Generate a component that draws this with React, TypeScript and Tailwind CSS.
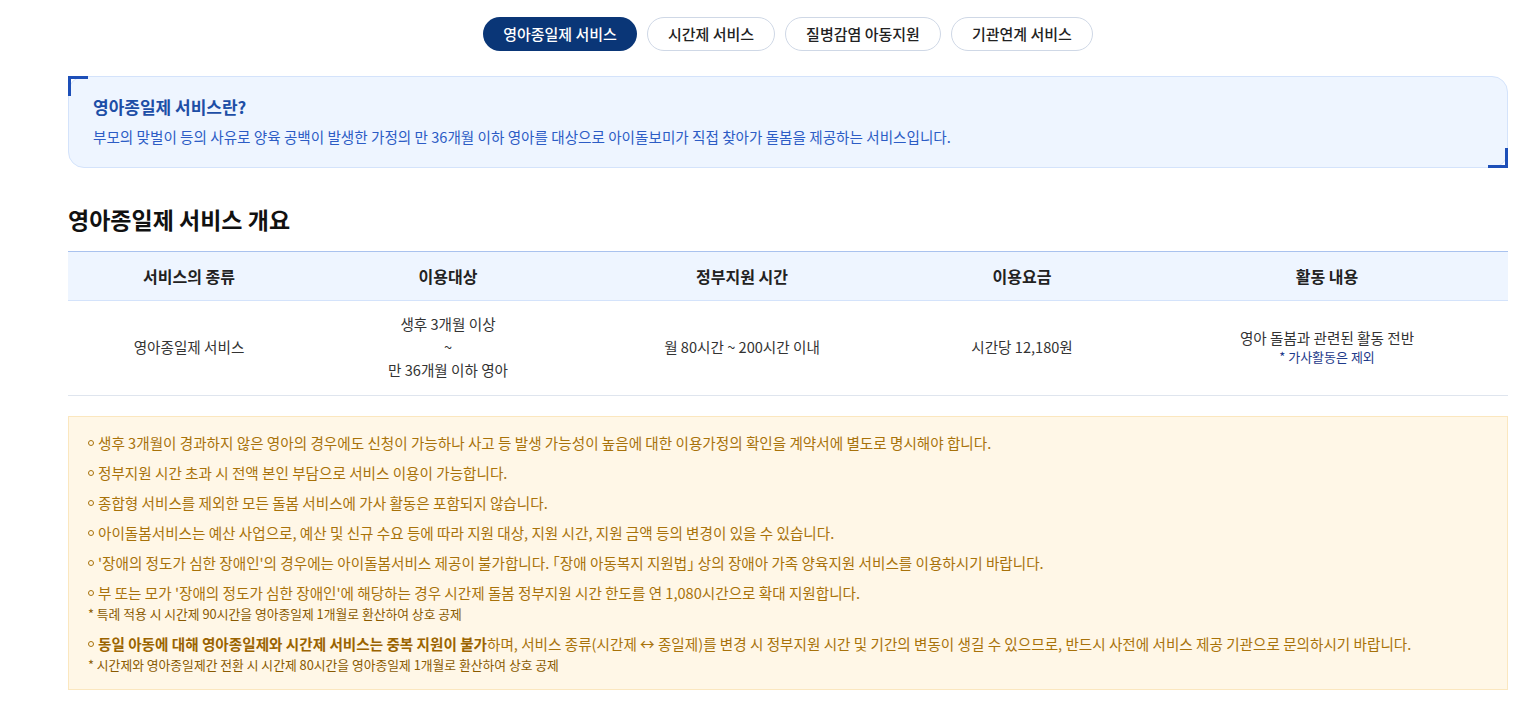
const tabs = ["영아종일제 서비스", "시간제 서비스", "질병감염 아동지원", "기관연계 서비스"];

const columns = [
    { label: "서비스의 종류", w: "w-[242px]" },
    { label: "이용대상", w: "w-[276px]" },
    { label: "정부지원 시간", w: "w-[312px]" },
    { label: "이용요금", w: "w-[248px]" },
    { label: "활동 내용", w: "flex-1" },
];

const notes: { text: React.ReactNode; sub?: string }[] = [
    { text: "생후 3개월이 경과하지 않은 영아의 경우에도 신청이 가능하나 사고 등 발생 가능성이 높음에 대한 이용가정의 확인을 계약서에 별도로 명시해야 합니다." },
    { text: "정부지원 시간 초과 시 전액 본인 부담으로 서비스 이용이 가능합니다." },
    { text: "종합형 서비스를 제외한 모든 돌봄 서비스에 가사 활동은 포함되지 않습니다." },
    { text: "아이돌봄서비스는 예산 사업으로, 예산 및 신규 수요 등에 따라 지원 대상, 지원 시간, 지원 금액 등의 변경이 있을 수 있습니다." },
    { text: "'장애의 정도가 심한 장애인'의 경우에는 아이돌봄서비스 제공이 불가합니다. ｢장애 아동복지 지원법｣ 상의 장애아 가족 양육지원 서비스를 이용하시기 바랍니다." },
    {
        text: "부 또는 모가 '장애의 정도가 심한 장애인'에 해당하는 경우 시간제 돌봄 정부지원 시간 한도를 연 1,080시간으로 확대 지원합니다.",
        sub: "* 특례 적용 시 시간제 90시간을 영아종일제 1개월로 환산하여 상호 공제",
    },
    {
        text: (
            <>
                <b className="font-bold text-[#9a6300]">동일 아동에 대해 영아종일제와 시간제 서비스는 중복 지원이 불가</b>
                하며, 서비스 종류(시간제 ↔ 종일제)를 변경 시 정부지원 시간 및 기간의 변동이 생길 수 있으므로, 반드시 사전에 서비스 제공 기관으로 문의하시기 바랍니다.
            </>
        ),
        sub: "* 시간제와 영아종일제간 전환 시 시간제 80시간을 영아종일제 1개월로 환산하여 상호 공제",
    },
];

export default function App() {
    return (
        <div className="min-h-[714px] bg-white font-['Noto_Sans_CJK_KR','Noto_Sans',sans-serif] text-[#222]">
            <div className="ml-[68px] w-[1440px] pt-[17px]">
                {/* tabs */}
                <div className="flex justify-center gap-[10px]">
                    {tabs.map((t, i) => (
                        <button
                            key={t}
                            className={
                                i === 0
                                    ? "h-[34px] px-[20px] rounded-full bg-[#0a3677] text-white text-[15px] font-medium"
                                    : "h-[34px] px-[20px] rounded-full border border-[#cfd8e6] bg-white text-[#222] text-[15px] font-medium"
                            }
                        >
                            {t}
                        </button>
                    ))}
                </div>

                {/* intro box */}
                <div className="relative mt-[25px] h-[92px] rounded-[16px] border border-[#d4e3fb] bg-[#eef5ff] px-[24px] pt-[18px]">
                    <span className="absolute -left-px -top-px w-[20px] h-[20px] border-l-[3px] border-t-[3px] border-[#1d4fb8]" />
                    <span className="absolute -right-px -bottom-px w-[20px] h-[20px] border-r-[3px] border-b-[3px] border-[#1d4fb8]" />
                    <h3 className="text-[17px] font-bold text-[#1d4ea6] leading-[24px]">영아종일제 서비스란?</h3>
                    <p className="mt-[8px] text-[14.6px] leading-[20px] text-[#2c5cc5]">
                        부모의 맞벌이 등의 사유로 양육 공백이 발생한 가정의 만 36개월 이하 영아를 대상으로 아이돌보미가 직접 찾아가 돌봄을 제공하는 서비스입니다.
                    </p>
                </div>

                {/* overview */}
                <h2 className="mt-[34px] text-[23px] font-bold leading-[34px] text-[#111]">영아종일제 서비스 개요</h2>

                <div className="mt-[15px] border-t border-[#a9c2ee]">
                    <div className="flex h-[49px] items-center bg-[#eef5ff] border-b border-[#d4e3fb]">
                        {columns.map((c) => (
                            <div key={c.label} className={`${c.w} text-center text-[16px] font-bold text-[#222]`}>
                                {c.label}
                            </div>
                        ))}
                    </div>
                    <div className="flex h-[95px] items-center border-b border-[#dfe5ee] pb-[3px] text-[14.6px] text-[#333]">
                        <div className="w-[242px] text-center">영아종일제 서비스</div>
                        <div className="w-[276px] text-center leading-[23px]">
                            <p>생후 3개월 이상</p>
                            <p>~</p>
                            <p>만 36개월 이하 영아</p>
                        </div>
                        <div className="w-[312px] text-center">월 80시간 ~ 200시간 이내</div>
                        <div className="w-[248px] text-center">시간당 12,180원</div>
                        <div className="flex-1 text-center">
                            <p className="leading-[20px]">영아 돌봄과 관련된 활동 전반</p>
                            <p className="text-[13px] leading-[18px] text-[#1e3a8a]">* 가사활동은 제외</p>
                        </div>
                    </div>
                </div>

                {/* notes */}
                <div className="mt-[20px] h-[274px] border border-[#fbe7bf] bg-[#fff7e7] px-[19px] pt-[16px] text-[#a8720a]">
                    <ul>
                        {notes.map((n, i) => (
                            <li key={i} className="mb-[10px]">
                                <p className="flex text-[14.6px] leading-[20px]">
                                    <span className="mr-[4px] mt-[7px] h-[6px] w-[6px] shrink-0 rounded-full border-[1.5px] border-[#a8720a]" />
                                    <span>{n.text}</span>
                                </p>
                                {n.sub && <p className="mt-px text-[12.8px] leading-[20px] text-[#8a5a00]">{n.sub}</p>}
                            </li>
                        ))}
                    </ul>
                </div>
            </div>
        </div>
    );
}
